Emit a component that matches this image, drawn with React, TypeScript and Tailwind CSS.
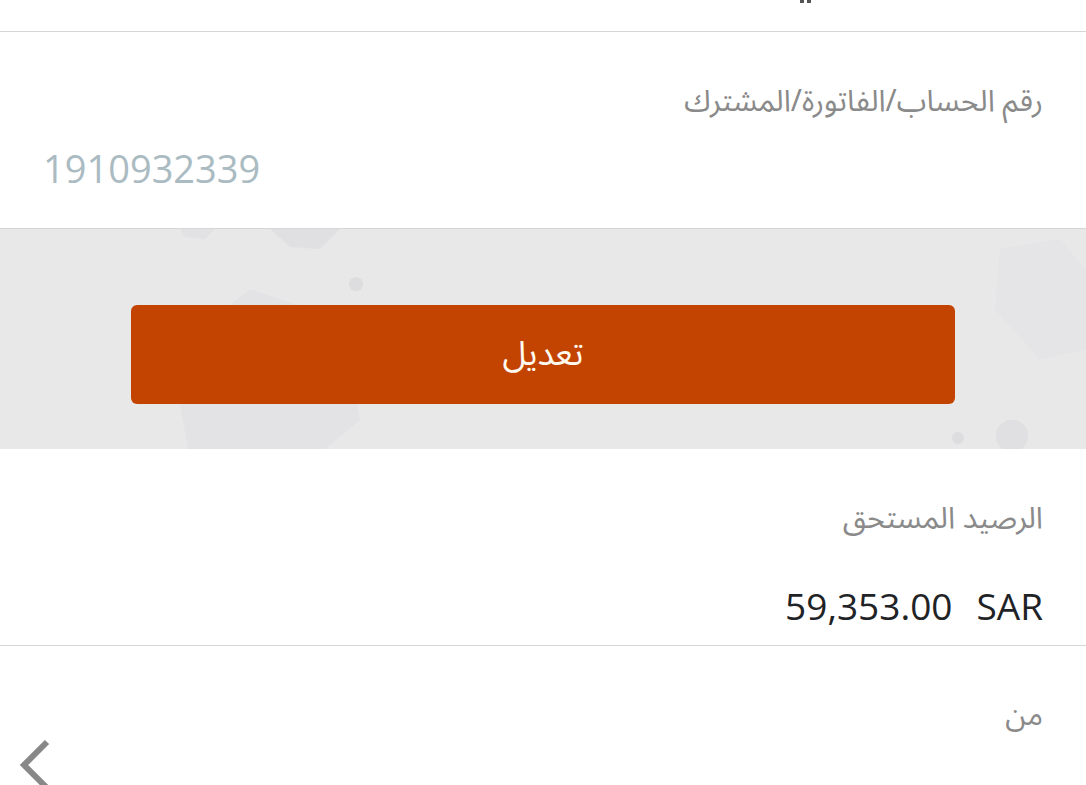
const arabic = "font-['Noto_Sans_Arabic','DejaVu_Sans',sans-serif]";
const latin = "font-['Open_Sans','Noto_Sans',sans-serif]";

function Hexagons() {
  return (
    <svg className="absolute inset-0 w-full h-full" viewBox="0 0 1086 219" preserveAspectRatio="none">
      <polygon points="170,120 250,60 340,90 360,190 300,240 190,230" fill="#dcdce0" opacity="0.4" />
      <polygon points="270,0 340,0 320,20 290,18" fill="#d6d6da" opacity="0.45" />
      <polygon points="180,0 215,0 205,10 185,8" fill="#d9d9dc" opacity="0.4" />
      <circle cx="356" cy="55" r="7" fill="#d2d2d6" opacity="0.5" />
      <circle cx="1012" cy="206" r="16" fill="#d8d8dc" opacity="0.55" />
      <circle cx="958" cy="208" r="6" fill="#d4d4d8" opacity="0.55" />
      <polygon points="1000,20 1060,10 1086,40 1086,120 1040,130 995,80" fill="#e2e2e5" opacity="0.45" />
    </svg>
  );
}

export default function App() {
  return (
    <div className="w-[1086px] h-[785px] overflow-hidden bg-white">
      <div className="h-[32px] border-b border-[#d6d6d6] relative">
        <span className="absolute left-[800px] -top-[1px] flex gap-[3px]">
          <span className="w-[4px] h-[4px] bg-[#555]" />
          <span className="w-[4px] h-[4px] bg-[#555]" />
        </span>
      </div>

      <div dir="rtl" className="h-[197px] border-b border-[#d6d6d6] px-[43px] pt-[50px]">
        <div className={`${arabic} text-[30px] leading-[40px] text-[#8a8a8a]`}>
          رقم الحساب/الفاتورة/المشترك
        </div>
        <div dir="ltr" className={`${latin} text-[38px] leading-[48px] mt-[22px] text-[#abbbc2] text-left`}>
          1910932339
        </div>
      </div>

      <div className="relative h-[220px] bg-[#e8e8e9] pt-[76px] flex justify-center">
        <Hexagons />
        <button className="relative w-[824px] h-[99px] rounded-[6px] bg-[#c24400] flex items-center justify-center">
          <span className={`${arabic} text-[34px] text-[#fffaf0]`}>تعديل</span>
        </button>
      </div>

      <div dir="rtl" className="h-[197px] border-b border-[#d6d6d6] px-[43px] pt-[50px]">
        <div className={`${arabic} text-[30px] leading-[40px] text-[#8a8a8a]`}>
          الرصيد المستحق
        </div>
        <div dir="ltr" className={`${latin} text-[37px] leading-[48px] mt-[43px] text-[#1f2326] flex justify-end gap-[24px]`}>
          <span>59,353.00</span>
          <span>SAR</span>
        </div>
      </div>

      <div dir="rtl" className="px-[43px] pt-[50px] relative h-[140px]">
        <div className={`${arabic} text-[30px] leading-[40px] text-[#8a8a8a]`}>من</div>
        <svg className="absolute left-[14px] top-[90px] w-[44px] h-[56px]" viewBox="0 0 44 56">
          <polyline points="33,6 10,29 33,52" fill="none" stroke="#888888" strokeWidth="6" strokeLinecap="butt" />
        </svg>
      </div>
    </div>
  );
}
